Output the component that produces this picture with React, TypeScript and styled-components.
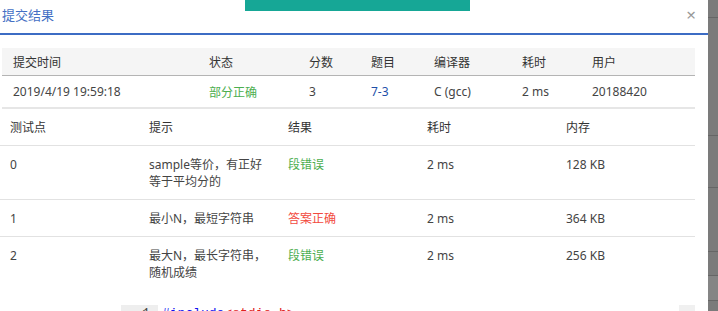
import React from "react";
import styled, { createGlobalStyle } from "styled-components";

const GlobalStyle = createGlobalStyle`
  html, body {
    margin: 0;
    padding: 0;
    background: #fff;
  }
  body {
    font-family: "Noto Sans", "Noto Sans CJK SC", sans-serif;
    font-size: 12px;
    color: #333;
  }
`;

const Page = styled.div`
  display: flex;
  width: 718px;
  height: 311px;
  overflow: hidden;
`;

const Modal = styled.div`
  position: relative;
  width: 708px;
  flex: none;
  background: #fff;
  overflow: hidden;
`;

const Toast = styled.div`
  position: absolute;
  left: 245px;
  top: 0;
  width: 225px;
  height: 11px;
  background: #16a796;
`;

const Header = styled.div`
  display: flex;
  align-items: center;
  justify-content: space-between;
  height: 35px;
  padding: 0 12px 5px 2px;
  box-sizing: border-box;
  border-bottom: 2px solid #3c6cc4;
`;

const Title = styled.div`
  font-size: 13px;
  color: #4470c4;
`;

const Close = styled.span`
  font-size: 17px;
  line-height: 1;
  color: #999;
`;

const Body = styled.div`
  padding-top: 13px;
  width: 695px;
`;

const Table = styled.table<{ $inset?: number }>`
  border-collapse: collapse;
  table-layout: fixed;
  margin-left: ${(p) => p.$inset || 0}px;
  width: ${(p) => 695 - (p.$inset || 0)}px;
`;

const SummaryHead = styled.th`
  background: #f5f5f5;
  font-weight: normal;
  text-align: left;
  height: 27px;
  padding: 0 0 0 11px;
  border-bottom: 1px solid #b4b4b4;
  color: #333;
`;

const SummaryCell = styled.td<{ $color?: string }>`
  height: 31px;
  padding: 0 0 0 11px;
  border-bottom: 2px solid #e6e6e6;
  color: ${(p) => p.$color || "#444"};
`;

const CaseHead = styled.th`
  font-weight: normal;
  text-align: left;
  height: 36px;
  padding: 0 0 0 10px;
  border-bottom: 1px solid #e2e2e2;
  color: #333;
`;

const CaseCell = styled.td<{ $color?: string; $last?: boolean }>`
  vertical-align: top;
  line-height: 17px;
  padding: 10px 0 9px 10px;
  border-bottom: ${(p) => (p.$last ? "none" : "1px solid #e2e2e2")};
  color: ${(p) => p.$color || "#444"};
`;

const Code = styled.div`
  display: flex;
  align-items: flex-start;
  margin: 15px 0 0 121px;
  width: 574px;
  font-family: "Liberation Mono", monospace;
  font-size: 13px;
  line-height: 18px;
`;

const Gutter = styled.div`
  width: 37px;
  padding-right: 8px;
  box-sizing: border-box;
  text-align: right;
  background: #eeeeee;
  color: #444;
`;

const Line = styled.div`
  flex: 1;
  padding-left: 4px;
`;

const Keyword = styled.span`
  color: #1010f0;
`;

const Str = styled.span`
  color: #e02020;
`;

const Thumb = styled.div`
  width: 16px;
  height: 18px;
  background: #f0f0f0;
`;

const Backdrop = styled.div`
  flex: 1;
  display: flex;
  flex-direction: column;
  background: #7b7b7b;
`;

const Seg = styled.div<{ $h: number; $shade?: string }>`
  height: ${(p) => p.$h}px;
  flex: none;
  background: ${(p) => p.$shade || "#7b7b7b"};
  border-bottom: 1px solid #666;
`;

const green = "#4cae4f";
const red = "#f24a3e";
const blue = "#1e4fa8";

const summaryCols = [196, 100, 62, 63, 88, 70, 114];
const summaryHeads = ["提交时间", "状态", "分数", "题目", "编译器", "耗时", "用户"];

const cases = [
  { id: "0", hint: ["sample等价，有正好", "等于平均分的"], result: "段错误", color: green, time: "2 ms", mem: "128 KB" },
  { id: "1", hint: ["最小N，最短字符串"], result: "答案正确", color: red, time: "2 ms", mem: "364 KB" },
  { id: "2", hint: ["最大N，最长字符串，", "随机成绩"], result: "段错误", color: green, time: "2 ms", mem: "256 KB" },
];

const App = () => {
  return (
    <Page>
      <GlobalStyle />
      <Modal>
        <Toast />
        <Header>
          <Title>提交结果</Title>
          <Close>×</Close>
        </Header>
        <Body>
          <Table $inset={2}>
            <colgroup>
              {summaryCols.map((w, i) => (
                <col key={i} style={{ width: w }} />
              ))}
            </colgroup>
            <thead>
              <tr>
                {summaryHeads.map((h) => (
                  <SummaryHead key={h}>{h}</SummaryHead>
                ))}
              </tr>
            </thead>
            <tbody>
              <tr>
                <SummaryCell>2019/4/19 19:59:18</SummaryCell>
                <SummaryCell $color={green}>部分正确</SummaryCell>
                <SummaryCell>3</SummaryCell>
                <SummaryCell $color={blue}>7-3</SummaryCell>
                <SummaryCell>C (gcc)</SummaryCell>
                <SummaryCell>2 ms</SummaryCell>
                <SummaryCell>20188420</SummaryCell>
              </tr>
            </tbody>
          </Table>

          <Table>
            <thead>
              <tr>
                <CaseHead>测试点</CaseHead>
                <CaseHead>提示</CaseHead>
                <CaseHead>结果</CaseHead>
                <CaseHead>耗时</CaseHead>
                <CaseHead>内存</CaseHead>
              </tr>
            </thead>
            <tbody>
              {cases.map((c, i) => {
                const last = i === cases.length - 1;
                return (
                  <tr key={c.id}>
                    <CaseCell $last={last}>{c.id}</CaseCell>
                    <CaseCell $last={last}>
                      {c.hint.map((l, j) => (
                        <div key={j}>{l}</div>
                      ))}
                    </CaseCell>
                    <CaseCell $last={last} $color={c.color}>
                      {c.result}
                    </CaseCell>
                    <CaseCell $last={last}>{c.time}</CaseCell>
                    <CaseCell $last={last}>{c.mem}</CaseCell>
                  </tr>
                );
              })}
            </tbody>
          </Table>

          <Code>
            <Gutter>1</Gutter>
            <Line>
              <Keyword>#include</Keyword>
              <Str>&lt;stdio.h&gt;</Str>
            </Line>
            <Thumb />
          </Code>
        </Body>
      </Modal>
      <Backdrop>
        <Seg $h={17} />
        <Seg $h={117} />
        <Seg $h={51} />
        <Seg $h={63} />
        <Seg $h={23} />
        <Seg $h={24} $shade="#858585" />
        <Seg $h={20} />
      </Backdrop>
    </Page>
  );
};

export default App;
